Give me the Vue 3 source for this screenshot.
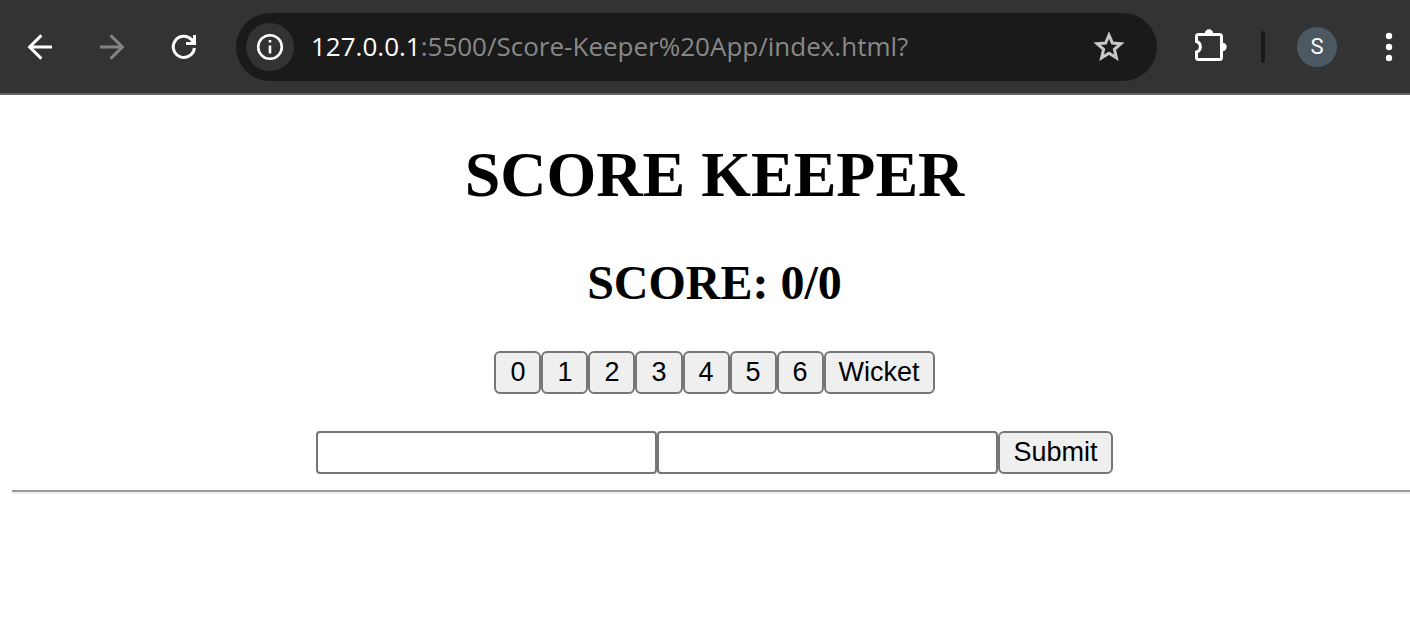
<script setup>
import { ref } from 'vue'

const runs = [0, 1, 2, 3, 4, 5, 6]
const score = ref(0)
const wickets = ref(0)
const first = ref('')
const second = ref('')
</script>

<template>
  <div class="window">
    <header class="toolbar">
      <nav class="nav" aria-label="Navigation">
        <button class="tool" type="button" aria-label="Back">
          <svg width="48" height="48" viewBox="0 0 48 48" fill="none" stroke="#fff" stroke-width="3">
            <path d="M36 24H14M25.4 12.4 13.6 24l11.8 11.6" />
          </svg>
        </button>
        <button class="tool" type="button" aria-label="Forward">
          <svg width="48" height="48" viewBox="0 0 48 48" fill="none" stroke="#848484" stroke-width="3">
            <path d="M12 24h22M22.6 12.4 34.4 24 22.6 35.6" />
          </svg>
        </button>
        <button class="tool" type="button" aria-label="Reload">
          <svg width="48" height="48" viewBox="0 0 48 48" fill="none" stroke="#fff" stroke-width="3">
            <path d="M34.4 25A10.6 10.6 0 1 1 31.4 16.400L34 19" />
            <path d="M34.500 12v8.500H26" />
            <path d="M29.500 20 34 15.500V20z" fill="#fff" stroke="none" />
          </svg>
        </button>
      </nav>

      <div class="address">
        <button class="info" type="button" aria-label="Site information">
          <svg width="48" height="48" viewBox="0 0 48 48" fill="none" stroke="#fff">
            <circle cx="24" cy="24" r="11.800" stroke-width="2.600" />
            <path d="M24 22.500V30.500M24 17v2.600" stroke-width="2.600" />
          </svg>
        </button>
        <span class="url"><span class="host">127.0.0.1</span>:5500/Score-Keeper%20App/index.html?</span>
        <button class="tool" type="button" aria-label="Bookmark this page">
          <svg width="48" height="48" viewBox="0 0 48 48" fill="none" stroke="#c7c7c7" stroke-width="3">
            <path d="M24 12 27.400 20l8.500.700-6.500 5.600 2 8.500L24 30.200l-7.400 4.600 2-8.500-6.500-5.600 8.500-.7z" />
          </svg>
        </button>
      </div>

      <div class="actions">
        <button class="tool" type="button" aria-label="Extensions">
          <svg width="48" height="48" viewBox="0 0 48 48">
            <path d="M12.500 11.500H33.500a2 2 0 0 1 2 2V34.500a2 2 0 0 1-2 2H12.500a2 2 0 0 1-2-2V29a5.500 5.500 0 0 0 0-10.500V13.500a2 2 0 0 1 2-2z" fill="none" stroke="#fff" stroke-width="3" />
            <path d="M18.800 10.500a4.200 4.200 0 0 1 8.400 0zM36.500 19.800a4.200 4.200 0 0 1 0 8.400z" fill="#fff" />
          </svg>
        </button>
        <span class="divider"></span>
        <button class="avatar" type="button" aria-label="Profile S">S</button>
        <button class="menu" type="button" aria-label="Menu">
          <svg width="24" height="48" viewBox="0 0 24 48" fill="#fff">
            <circle cx="12" cy="13" r="3.200" />
            <circle cx="12" cy="24" r="3.200" />
            <circle cx="12" cy="35" r="3.200" />
          </svg>
        </button>
      </div>
    </header>

    <main class="page">
      <h1>SCORE KEEPER</h1>
      <h2>SCORE: {{ score }}/{{ wickets }}</h2>
      <div class="row">
        <button v-for="run in runs" :key="run" class="btn" type="button" @click="score += run">{{ run }}</button>
        <button class="btn word" type="button" @click="wickets++">Wicket</button>
      </div>
      <form class="row form" @submit.prevent>
        <input v-model="first" type="text" aria-label="First value">
        <input v-model="second" type="text" aria-label="Second value">
        <button class="btn word" type="submit">Submit</button>
      </form>
      <hr>
    </main>
  </div>
</template>

<style>
body {
  background: #fff;
}
</style>

<style scoped>
.window {
  overflow-x: clip;
}

.toolbar {
  display: flex;
  align-items: center;
  padding: 13px 9px 12px 16px;
  border-bottom: 2px solid #626262;
  background: #333;
}

.toolbar button {
  flex: none;
  padding: 0;
  border: 0;
  background: transparent;
}

.toolbar svg {
  display: block;
}

.nav {
  display: flex;
  gap: 24px;
}

.address {
  display: flex;
  flex: 1;
  align-items: center;
  min-width: 0;
  height: 68px;
  margin: 0 29px 0 28px;
  padding: 0 24px 0 10px;
  border-radius: 34px;
  background: #1a1a1a;
}

.toolbar .info {
  border-radius: 50%;
  background: #333;
}

.url {
  flex: 1;
  min-width: 0;
  margin-left: 17px;
  padding-bottom: 2px;
  overflow: hidden;
  color: #888;
  font: 26px/40px "Open Sans", "Noto Sans", sans-serif;
  white-space: nowrap;
}

.host {
  color: #fff;
}

.actions {
  display: flex;
  align-items: center;
}

.divider {
  width: 4px;
  height: 32px;
  margin: 0 32px 0 27px;
  border-radius: 2px;
  background: #1a1a1a;
}

.toolbar .avatar {
  width: 40px;
  height: 40px;
  border-radius: 50%;
  background: #4c5963;
  color: #fff;
  font: 22px/40px Roboto, sans-serif;
}

.toolbar .menu {
  margin-left: 40px;
}

.page {
  margin: 0 -7px 0 12px;
  padding-top: 43px;
  color: #000;
  font-family: "Liberation Serif", "Times New Roman", serif;
  text-align: center;
}

h1 {
  margin: 0 0 43px;
  font-size: 64px;
  line-height: 74px;
}

h2 {
  margin: 0 0 41px;
  font-size: 48px;
  line-height: 55px;
}

.row {
  display: flex;
  justify-content: center;
}

.form {
  margin-top: 37px;
}

.btn,
input {
  box-sizing: border-box;
  height: 43px;
  margin: 0;
  border: 2px solid #767676;
  color: #000;
  font: 27px/37px "Liberation Sans", Arial, sans-serif;
}

.btn {
  padding: 0 14px;
  border-radius: 6px;
  background: #efefef;
}

.word {
  padding: 0 13px;
}

input {
  width: 341px;
  min-width: 0;
  padding: 2px 4px;
  border-radius: 4px;
  background: #fff;
}

hr {
  height: 2px;
  margin: 16px 0 0;
  border: 0;
  border-top: 2px solid #9a9a9a;
  background: #eee;
}
</style>
